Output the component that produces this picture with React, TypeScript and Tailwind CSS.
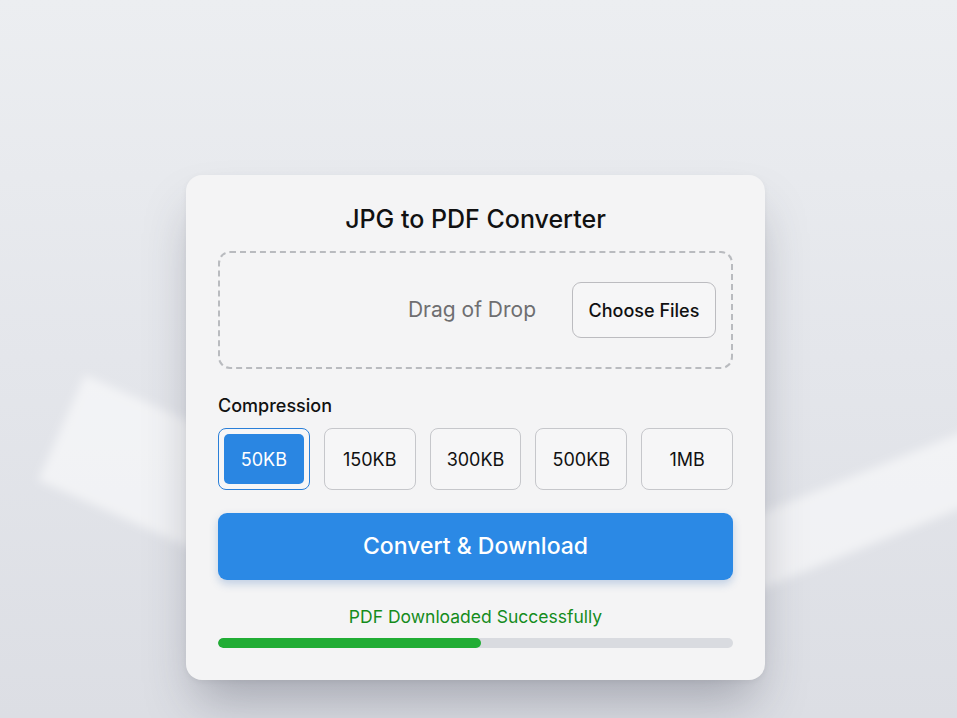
import { useState } from 'react'

const SIZES = ['50KB', '150KB', '300KB', '500KB', '1MB']

export default function App() {
  const [selected, setSelected] = useState('50KB')
  const progress = 51

  return (
    <div
      className="relative w-[957px] h-[718px] overflow-hidden bg-gradient-to-b from-[#eceef1] via-[#e4e6eb] to-[#dcdee4]"
      style={{ fontFamily: 'Inter, "Noto Sans", sans-serif' }}
    >
      {/* light beams behind the card */}
      <div className="absolute left-[85px] top-[375px] w-[400px] h-[115px] bg-white/55 blur-[5px] rotate-[24deg] origin-top-left" />
      <div className="absolute left-[720px] top-[530px] w-[320px] h-[70px] bg-white/55 blur-[5px] -rotate-[22deg] origin-top-left" />

      <div className="relative flex justify-center pt-[175px] pr-[6px]">
        <div className="w-[579px] rounded-[16px] bg-[#f4f4f5] px-[32px] pt-[28px] pb-[32px] shadow-[0_30px_50px_-10px_rgba(60,64,80,0.35),0_2px_6px_rgba(0,0,0,0.05)]">
          {/* Title */}
          <h1 className="text-center text-[25px] leading-[32px] font-medium text-[#111]">
            JPG to PDF Converter
          </h1>

          {/* Drop zone */}
          <div className="mt-[16px] h-[118px] rounded-[12px] border-2 border-dashed border-[#b9bbbf] flex items-center justify-end pr-[15px] gap-[36px]">
            <span className="text-[21px] text-[#6e6e70]">Drag of Drop</span>
            <button className="w-[144px] h-[56px] rounded-[9px] border border-[#bcbcc0] bg-[#f6f6f7] text-[18px] font-medium text-[#111]">
              Choose Files
            </button>
          </div>

          {/* Compression */}
          <div className="mt-[25px] text-[18px] leading-[24px] font-medium text-[#111]">Compression</div>
          <div className="mt-[10px] grid grid-cols-5 gap-[14px]">
            {SIZES.map((s) => {
              const active = s === selected
              return (
                <button
                  key={s}
                  onClick={() => setSelected(s)}
                  className={
                    active
                      ? 'h-[62px] rounded-[8px] border-[1.5px] border-[#2a7fd8] bg-[#f6f6f7] p-[5px]'
                      : 'h-[62px] rounded-[8px] border border-[#c6c7cb] bg-[#f6f6f7] text-[18px] text-[#111]'
                  }
                >
                  {active ? (
                    <span className="flex h-full w-full items-center justify-center rounded-[5px] bg-[#2a86e2] text-[18px] text-white">
                      {s}
                    </span>
                  ) : (
                    s
                  )}
                </button>
              )
            })}
          </div>

          {/* Convert */}
          <button className="mt-[23px] w-full h-[67px] rounded-[9px] bg-[#2b89e5] text-[23px] font-medium text-white shadow-[0_4px_8px_rgba(40,100,180,0.25)]">
            Convert &amp; Download
          </button>

          {/* Status */}
          <div className="mt-[25px] text-center text-[17.5px] leading-[24px] text-[#158c1c]">
            PDF Downloaded Successfully
          </div>
          <div className="mt-[9px] h-[10px] w-full rounded-full bg-[#d9dbe0] overflow-hidden">
            <div className="h-full rounded-full bg-[#21ad35]" style={{ width: `${progress}%` }} />
          </div>
        </div>
      </div>
    </div>
  )
}
